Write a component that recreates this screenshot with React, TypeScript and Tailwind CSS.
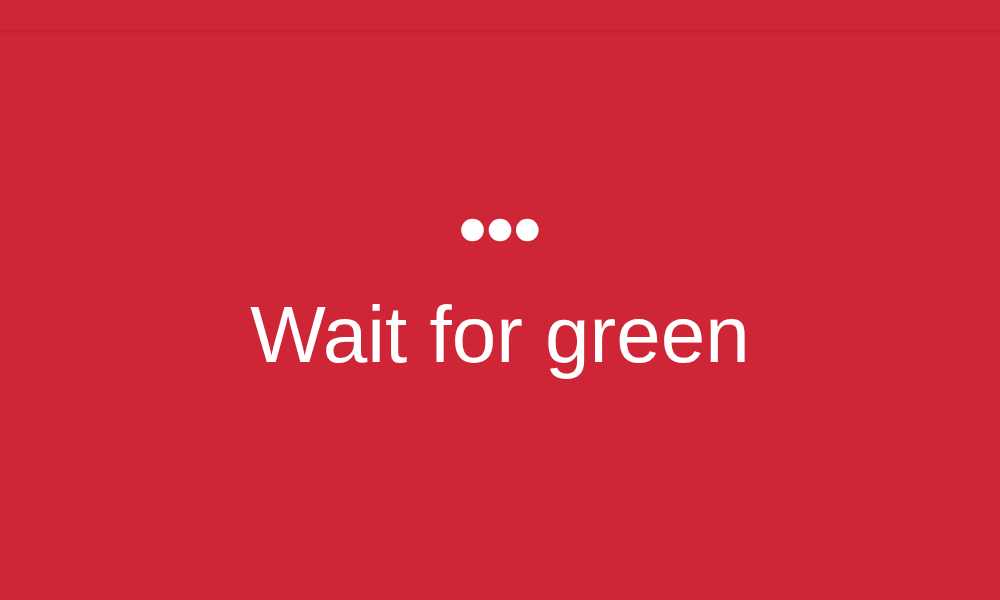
export default function App() {
  return (
    <div className="flex h-[600px] w-full flex-col bg-[#ce2636] text-white" style={{ fontFamily: '"Liberation Sans", Arial, sans-serif' }}>
      <div className="relative z-10 h-[30px] w-full shrink-0 bg-[#ce2636] shadow-[0_1px_4px_rgba(0,0,0,0.14)]" />
      <main className="flex flex-1 flex-col items-center pt-[188px]">
        <svg width="78" height="24" viewBox="0 0 78 24" className="block">
          <circle cx="11.5" cy="12" r="11.3" fill="white" />
          <circle cx="39" cy="12" r="11.3" fill="white" />
          <circle cx="66.3" cy="12" r="11.3" fill="white" />
        </svg>
        <h1 className="mt-[53px] text-[80px] leading-[80px] font-normal">Wait for green</h1>
      </main>
    </div>
  );
}
